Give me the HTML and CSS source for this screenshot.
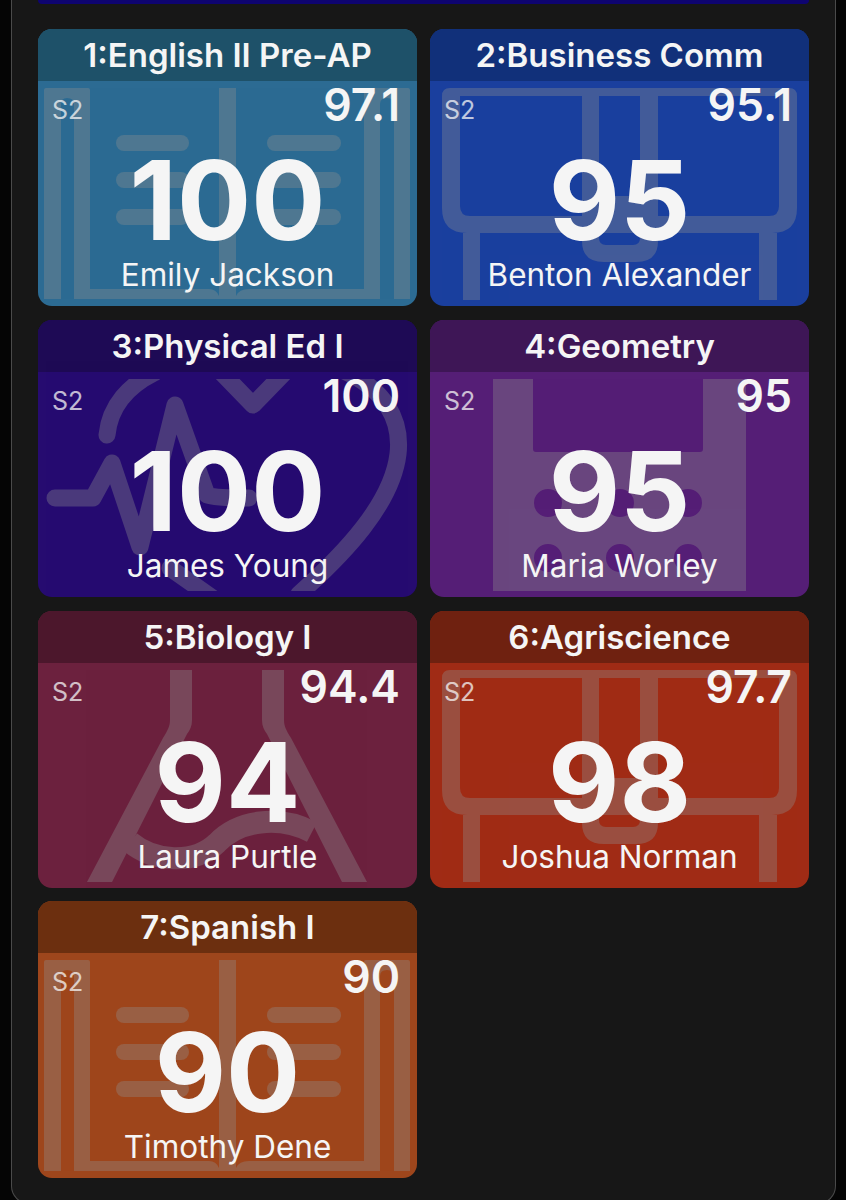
FILE: index.html
```html
<!DOCTYPE html>
<html lang="en">
<head>
<meta charset="utf-8">
<title>Classes</title>
<link rel="stylesheet" href="styles.css">
</head>
<body>
<svg class="defs" width="0" height="0" aria-hidden="true">
  <defs>
    <g id="i-book">
      <path fill-rule="evenodd" d="M2 0H44Q46 0 46 2V201H165Q172 201 175 208V0H192V208Q195 201 205 201H320V2Q320 0 322 0H364Q366 0 366 2V211H0V2Q0 0 2 0ZM17 16V211H30V16Q30 10 23 10Q17 10 17 16ZM336 16V211H350V16Q350 10 343 10Q336 10 336 16Z"/>
      <rect x="72" y="47" width="73" height="16" rx="8"/><rect x="72" y="84" width="73" height="16" rx="8"/><rect x="72" y="121" width="73" height="16" rx="8"/>
      <rect x="223" y="47" width="74" height="16" rx="8"/><rect x="223" y="84" width="74" height="16" rx="8"/><rect x="223" y="121" width="74" height="16" rx="8"/>
    </g>
    <g id="i-desk">
      <path fill-rule="evenodd" d="M14 0H353Q361 0 361 8V120Q361 145 336 145H341V212H323V145H44V212H27V145H31Q6 145 6 120V8Q6 0 14 0ZM24 8V118Q24 128 34 128H146V8ZM163 8V108H204V8ZM222 8V128H333Q343 128 343 118V8Z"/>
      <path d="M146 145H163V150Q163 157 170 157H197Q204 157 204 150V145H222V153Q222 174 200 174H168Q146 174 146 153Z"/>
    </g>
    <g id="i-heart">
      <path fill="none" stroke-width="17" stroke-linecap="round" stroke-linejoin="round" d="M63 56C66 26 86 6 110 -6M175 -9L209 26L243 -9M300 -8C340 10 358 40 354 75C348 125 300 175 255 215M126 189L170 220M11 119H49L68 84L96 168L131 26L163 116Q170 119 205 119"/>
    </g>
    <g id="i-computer">
      <path fill-rule="evenodd" d="M57 0H97V70Q97 73 100 73H264Q267 73 267 70V0H310V212H57ZM98 124a14 14 0 1 0 28 0a14 14 0 1 0 -28 0ZM170 124a14 14 0 1 0 28 0a14 14 0 1 0 -28 0ZM238 124a14 14 0 1 0 28 0a14 14 0 1 0 -28 0ZM98 179a14 14 0 1 0 28 0a14 14 0 1 0 -28 0ZM170 179a14 14 0 1 0 28 0a14 14 0 1 0 -28 0ZM238 179a14 14 0 1 0 28 0a14 14 0 1 0 -28 0Z"/>
    </g>
    <g id="i-flask">
      <path d="M126 0H148V50C148 56 146 60 143 64L68 212H43L119 68C124 60 126 56 126 50ZM218 0H240V50C240 56 242 60 247 68L323 212H298L223 64C220 60 218 56 218 50Z"/>
      <path fill="none" stroke-width="22" d="M86 172C110 192 150 195 173 173C195 150 235 145 268 162"/>
    </g>
  </defs>
</svg>
<div class="screen">
  <main class="panel">
    <div class="topbar"></div>
    <section class="grid">
      <article class="card c1">
        <h2 class="title">1:English II Pre-AP</h2>
        <div class="body">
          <svg class="icon" viewBox="0 0 367 212" preserveAspectRatio="none"><use href="#i-book"/></svg>
          <div class="top"><span class="term">S2</span><span class="avg">97.1</span></div>
          <div class="grade">100</div>
          <div class="teacher">Emily Jackson</div>
        </div>
      </article>
      <article class="card c2">
        <h2 class="title">2:Business Comm</h2>
        <div class="body">
          <svg class="icon" viewBox="0 0 367 212" preserveAspectRatio="none"><use href="#i-desk"/></svg>
          <div class="top"><span class="term">S2</span><span class="avg">95.1</span></div>
          <div class="grade">95</div>
          <div class="teacher">Benton Alexander</div>
        </div>
      </article>
      <article class="card c3">
        <h2 class="title">3:Physical Ed I</h2>
        <div class="body">
          <svg class="icon" viewBox="0 0 367 212" preserveAspectRatio="none"><use href="#i-heart"/></svg>
          <div class="top"><span class="term">S2</span><span class="avg">100</span></div>
          <div class="grade">100</div>
          <div class="teacher">James Young</div>
        </div>
      </article>
      <article class="card c4">
        <h2 class="title">4:Geometry</h2>
        <div class="body">
          <svg class="icon" viewBox="0 0 367 212" preserveAspectRatio="none"><use href="#i-computer"/></svg>
          <div class="top"><span class="term">S2</span><span class="avg">95</span></div>
          <div class="grade">95</div>
          <div class="teacher">Maria Worley</div>
        </div>
      </article>
      <article class="card c5">
        <h2 class="title">5:Biology I</h2>
        <div class="body">
          <svg class="icon" viewBox="0 0 367 212" preserveAspectRatio="none"><use href="#i-flask"/></svg>
          <div class="top"><span class="term">S2</span><span class="avg">94.4</span></div>
          <div class="grade">94</div>
          <div class="teacher">Laura Purtle</div>
        </div>
      </article>
      <article class="card c6">
        <h2 class="title">6:Agriscience</h2>
        <div class="body">
          <svg class="icon" viewBox="0 0 367 212" preserveAspectRatio="none"><use href="#i-desk"/></svg>
          <div class="top"><span class="term">S2</span><span class="avg">97.7</span></div>
          <div class="grade">98</div>
          <div class="teacher">Joshua Norman</div>
        </div>
      </article>
      <article class="card c7">
        <h2 class="title">7:Spanish I</h2>
        <div class="body">
          <svg class="icon" viewBox="0 0 367 212" preserveAspectRatio="none"><use href="#i-book"/></svg>
          <div class="top"><span class="term">S2</span><span class="avg">90</span></div>
          <div class="grade">90</div>
          <div class="teacher">Timothy Dene</div>
        </div>
      </article>
    </section>
  </main>
</div>
</body>
</html>
```
FILE: styles.css
```css
* { box-sizing: border-box; margin: 0; padding: 0; }
html, body { background: #050505; height: 1200px; overflow: hidden; }
body { font-family: Inter, "Liberation Sans", sans-serif; color: #f5f5f5; }
.defs { display: block; height: 0; }
.screen { padding: 0 10px 0 11px; height: 1200px; }
.panel {
  height: 1204px;
  background: #171717;
  border: 1px solid #4a4a4a;
  border-top: 0;
  border-radius: 0 0 18px 18px;
  padding: 0 26px;
}
.topbar { height: 4px; background: #0e0470; border-radius: 0 0 8px 8px; margin-bottom: 25px; }
.grid { display: grid; grid-template-columns: 379px 379px; column-gap: 13px; row-gap: 13.8px; grid-auto-rows: 277px; }
.card { border-radius: 14px; overflow: hidden; display: flex; flex-direction: column; }
.title { height: 52px; font-size: 33px; line-height: 52px; font-weight: 600; text-align: center; flex: none; }
.body { position: relative; flex: 1; padding: 2px 17px 0 14px; display: flex; flex-direction: column; }
.icon { position: absolute; left: 6px; top: 7px; width: 367px; height: 212px; fill: #909090; stroke: #909090; stroke-width: 0; opacity: .35; overflow: hidden; }
.top { position: relative; display: flex; justify-content: space-between; align-items: flex-start; height: 62px; }
.term { font-size: 25px; line-height: 40px; margin-top: 7px; opacity: .75; }
.avg { font-size: 44.5px; line-height: 44px; font-weight: 600; }
.grade { position: relative; text-align: center; font-size: 110px; line-height: 110px; font-weight: 700; margin-left: -14px; width: 379px; }
.teacher { position: relative; text-align: center; font-size: 31.5px; line-height: 40px; margin-left: -14px; width: 379px; }
.c1 { background: #2c6b93; } .c1 .title { background: #1e5169; }
.c2 { background: #1a3f9e; } .c2 .title { background: #11307a; }
.c3 { background: #260b70; } .c3 .title { background: #1e0a55; }
.c4 { background: #551e76; } .c4 .title { background: #3e1656; }
.c5 { background: #6c213e; } .c5 .title { background: #4c172c; }
.c6 { background: #a02b15; } .c6 .title { background: #6f2110; }
.c7 { background: #9e461c; } .c7 .title { background: #6c2f0f; }
```
